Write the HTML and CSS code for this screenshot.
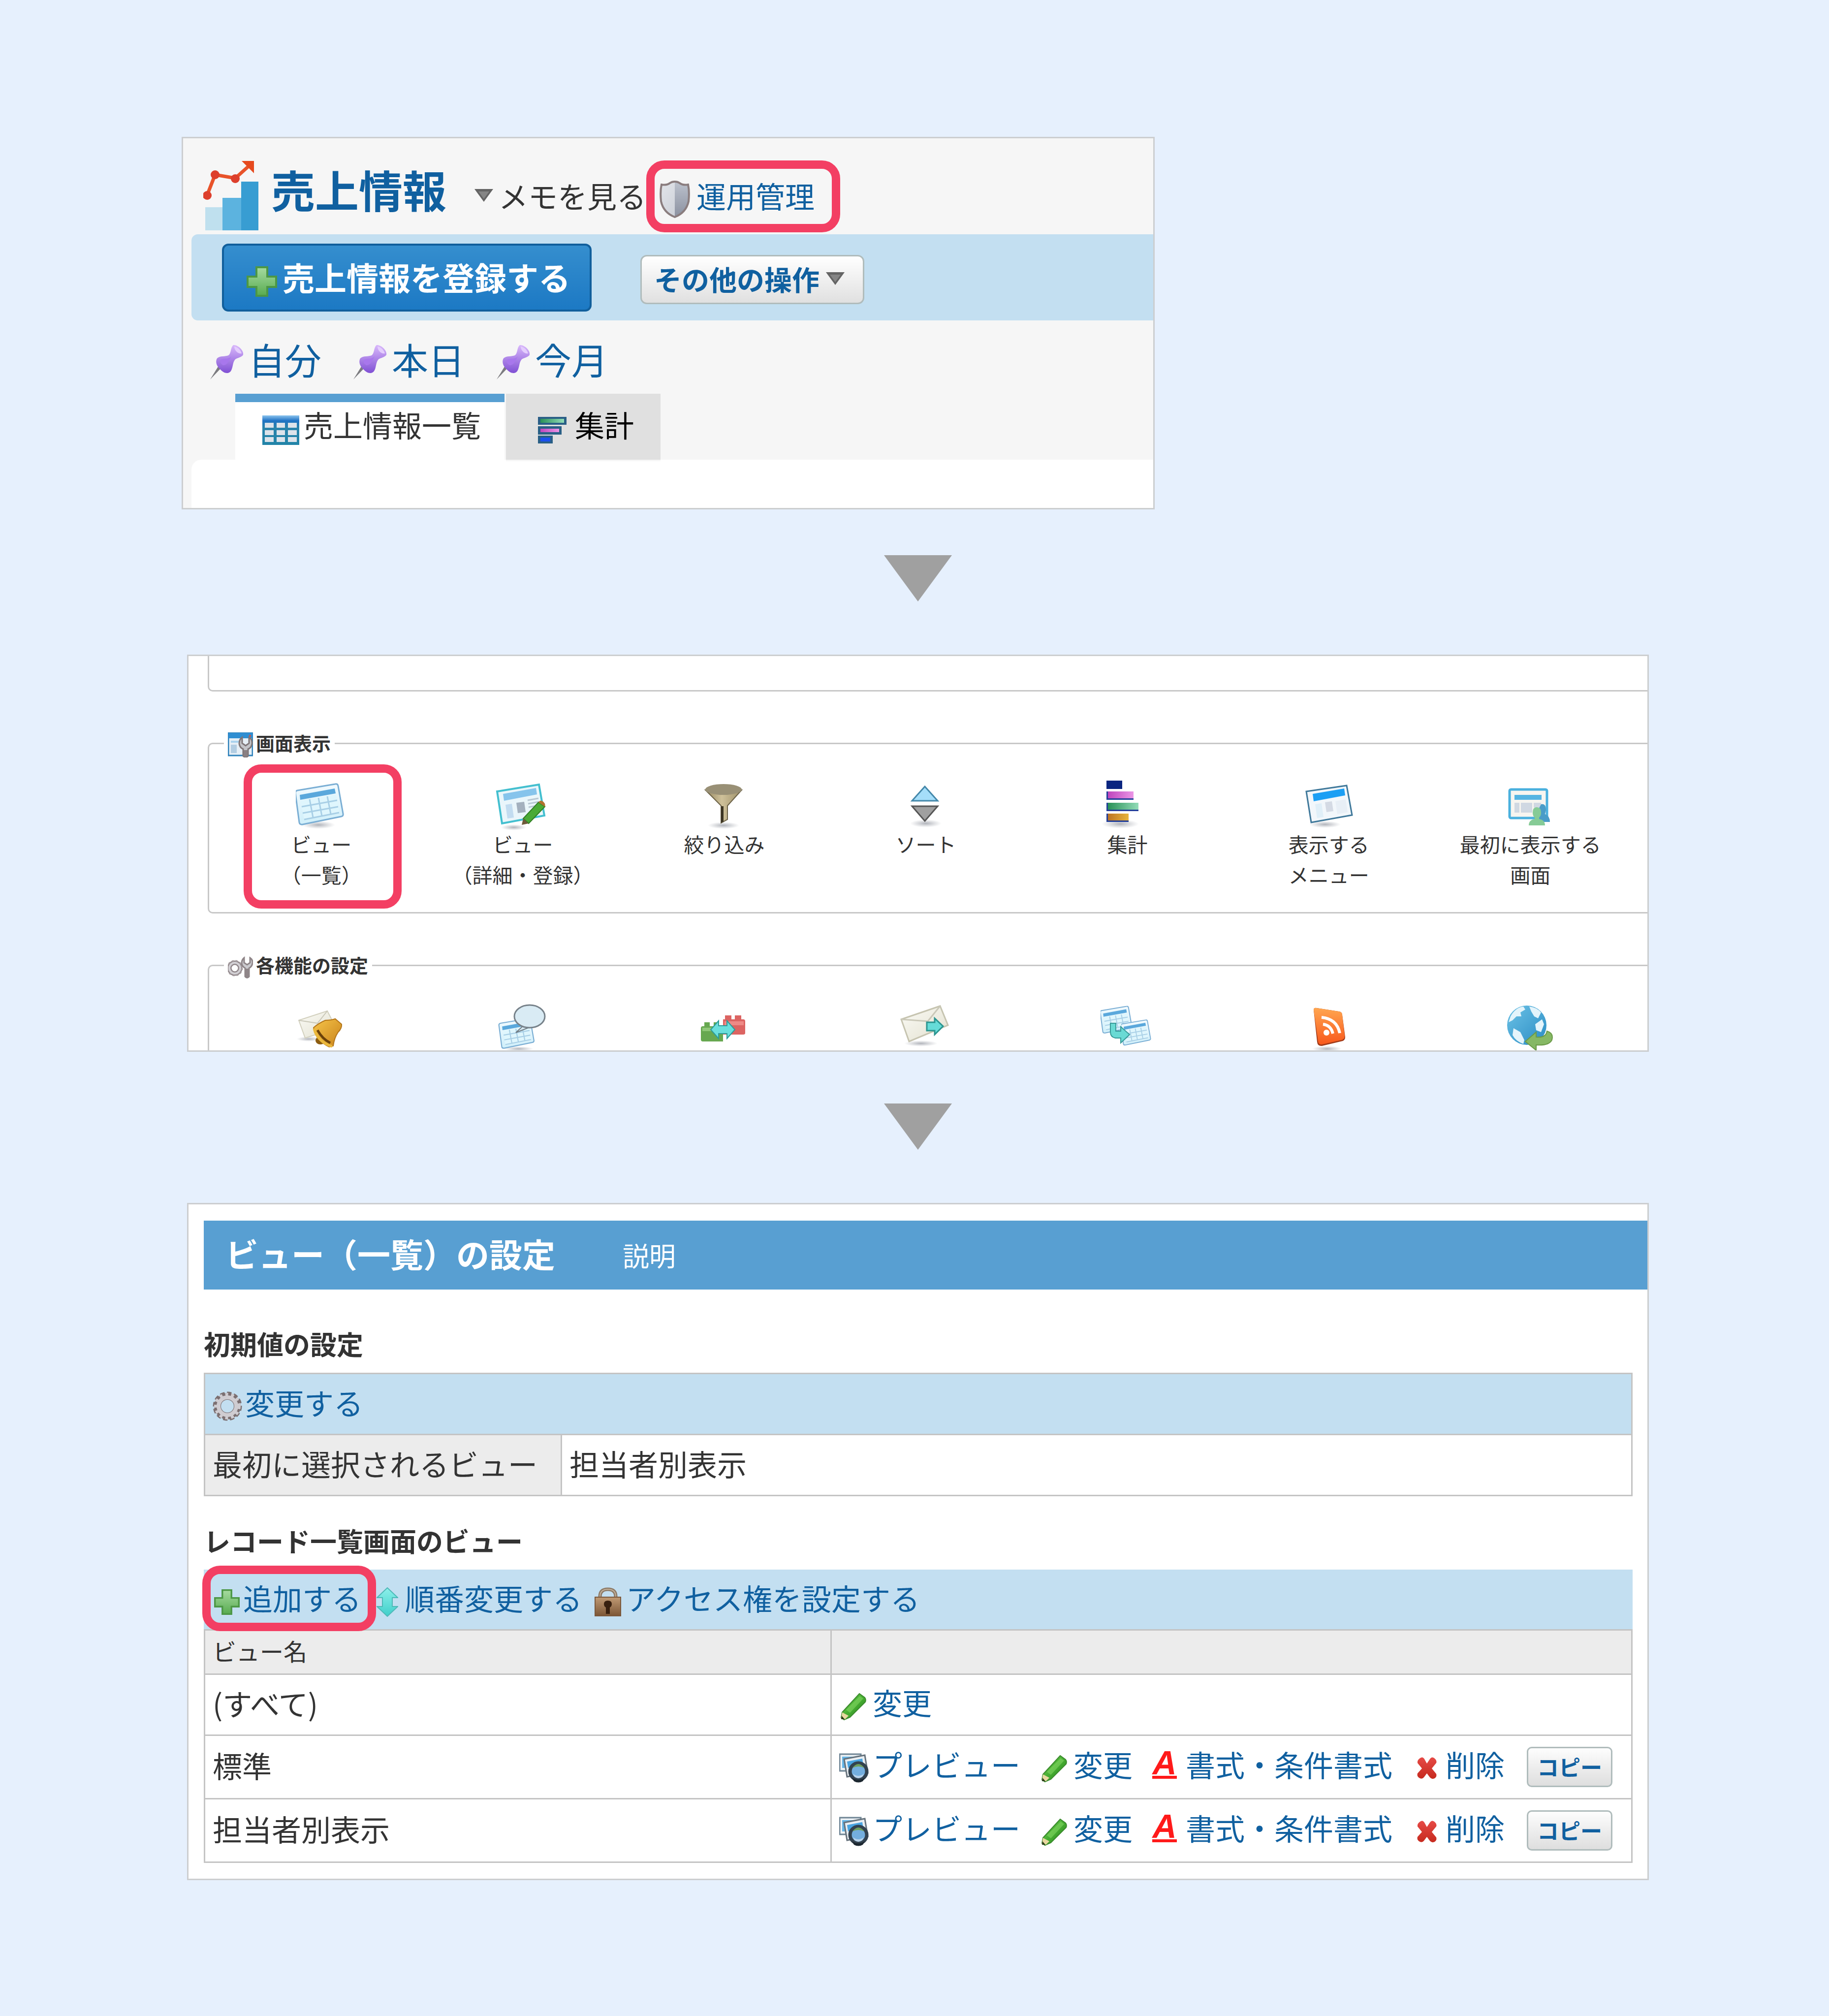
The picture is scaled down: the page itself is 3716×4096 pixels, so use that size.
FILE: index.html
```html
<!DOCTYPE html>
<html lang="ja">
<head>
    <meta charset="UTF-8">
    <title>ビュー(一覧)の設定</title>
    <link rel="stylesheet" href="styles.css">
</head>
<body>
<svg class="defs" aria-hidden="true">
    <defs>
        <linearGradient id="gGreen" x1="0" y1="0" x2="0" y2="1">
            <stop offset="0" stop-color="#a6dba0"/><stop offset="1" stop-color="#58ab50"/>
        </linearGradient>
        <linearGradient id="gCyan" x1="0" y1="0" x2="0" y2="1">
            <stop offset="0" stop-color="#8df0ea"/><stop offset="1" stop-color="#3fcfca"/>
        </linearGradient>
        <linearGradient id="gShieldL" x1="0" y1="0" x2="1" y2="1">
            <stop offset="0" stop-color="#e2e5ea"/><stop offset="1" stop-color="#c6cad2"/>
        </linearGradient>
        <linearGradient id="gShieldR" x1="0" y1="0" x2="0" y2="1">
            <stop offset="0" stop-color="#bcc2cd"/><stop offset="1" stop-color="#8b91a0"/>
        </linearGradient>
        <linearGradient id="gPin" x1="0" y1="0" x2="0" y2="1">
            <stop offset="0" stop-color="#d9b8fb"/><stop offset="1" stop-color="#8050d4"/>
        </linearGradient>
        <linearGradient id="gTable" x1="0" y1="0" x2="0" y2="1">
            <stop offset="0" stop-color="#8cc4ee"/><stop offset="0.18" stop-color="#1f72c4"/><stop offset="0.4" stop-color="#2a83ab"/><stop offset="1" stop-color="#2284a8"/>
        </linearGradient>
        <linearGradient id="gSky" x1="0" y1="0" x2="0" y2="1">
            <stop offset="0" stop-color="#f2fafe"/><stop offset="1" stop-color="#cfeffa"/>
        </linearGradient>
        <linearGradient id="gFunnel" x1="0" y1="0" x2="1" y2="0">
            <stop offset="0" stop-color="#93855e"/><stop offset="0.45" stop-color="#cfc19a"/><stop offset="1" stop-color="#9d9069"/>
        </linearGradient>
        <linearGradient id="gBell" x1="0" y1="0" x2="1" y2="1">
            <stop offset="0" stop-color="#f6c54a"/><stop offset="1" stop-color="#c9821a"/>
        </linearGradient>
        <linearGradient id="gRss" x1="0" y1="0" x2="0" y2="1">
            <stop offset="0" stop-color="#ffa650"/><stop offset="1" stop-color="#f8581c"/>
        </linearGradient>
        <linearGradient id="gGlobe" x1="0" y1="0" x2="1" y2="1">
            <stop offset="0" stop-color="#6cc2e6"/><stop offset="1" stop-color="#2a8cc4"/>
        </linearGradient>
        <linearGradient id="gMail" x1="0" y1="0" x2="1" y2="1">
            <stop offset="0" stop-color="#fbfbf6"/><stop offset="1" stop-color="#e2e0cf"/>
        </linearGradient>
        <linearGradient id="gPink" x1="0" y1="0" x2="1" y2="0">
            <stop offset="0" stop-color="#bf46bd"/><stop offset="1" stop-color="#eb95e6"/>
        </linearGradient>
        <linearGradient id="gMint" x1="0" y1="0" x2="1" y2="0">
            <stop offset="0" stop-color="#2a9158"/><stop offset="1" stop-color="#93dcb8"/>
        </linearGradient>
        <linearGradient id="gGold" x1="0" y1="0" x2="1" y2="0">
            <stop offset="0" stop-color="#bc7424"/><stop offset="1" stop-color="#e6b43c"/>
        </linearGradient>
        <linearGradient id="gLock" x1="0" y1="0" x2="0" y2="1">
            <stop offset="0" stop-color="#c09a74"/><stop offset="1" stop-color="#7c5636"/>
        </linearGradient>
        <linearGradient id="gCross" x1="0" y1="0" x2="0" y2="1">
            <stop offset="0" stop-color="#e64a46"/><stop offset="1" stop-color="#c62a1e"/>
        </linearGradient>
        <linearGradient id="gPencil" x1="0" y1="0" x2="1" y2="1">
            <stop offset="0" stop-color="#7ed35c"/><stop offset="0.5" stop-color="#46ae32"/><stop offset="1" stop-color="#2a7f1e"/>
        </linearGradient>
        <radialGradient id="gShadow">
            <stop offset="0" stop-color="#8e929c" stop-opacity="0.7"/><stop offset="1" stop-color="#a0a4ac" stop-opacity="0"/>
        </radialGradient>
    </defs>
    <symbol id="i-plus" viewBox="0 0 62 62">
        <path d="M20 2H42V21H60V42H42V60H20V42H2V21H20Z" fill="url(#gGreen)" stroke="#4c9745" stroke-width="4"/>
    </symbol>
    <symbol id="i-down" viewBox="0 0 40 28">
        <path d="M1 1H39L20 27Z" fill="#646464"/><path d="M9 6H31L20 21Z" fill="#858585"/>
    </symbol>
    <symbol id="i-pin" viewBox="0 0 70 72">
        <path d="M23 48L1 71L17 45Z" fill="#7c7c80"/>
        <path d="M48 1C57 0 70 12 68 21C65 26 56 27 52 30C46 37 48 46 43 54C38 61 28 58 22 51C14 44 11 35 15 28C21 22 32 25 38 22C44 18 42 6 48 1Z" fill="url(#gPin)"/>
        <path d="M50 4C57 5 63 11 65 18C58 20 50 12 50 4Z" fill="#e4cdfd"/>
        <path d="M44 24C38 31 30 27 22 31C20 36 24 41 28 42C36 42 40 32 44 24Z" fill="#a877ec"/>
    </symbol>
    <symbol id="i-pencil" viewBox="0 0 60 60">
        <path d="M41 5L52 13Q55 17 53 22L22 53L10 58L4 54L6 43Z" fill="url(#gPencil)" stroke="#3a8a2c" stroke-width="2"/>
        <path d="M42 10L49 15L22 44L14 38Z" fill="#86d866" opacity="0.55"/>
        <path d="M6 43L19 50L12 57L4 55Z" fill="#e8d8a0"/>
        <path d="M5 50L11 57L4 57Z" fill="#2a3a18"/>
    </symbol>
    <symbol id="i-preview" viewBox="0 0 60 60">
        <path d="M1 2H44V36H1Z" fill="#eef3f6" stroke="#6e8494" stroke-width="3"/>
        <path d="M6 7H38V14H14V30H6Z" fill="#64b4e6"/>
        <path d="M10 12L52 4L58 40L16 48Z" fill="#e9eef2" stroke="#66727c" stroke-width="3"/>
        <path d="M16 17L47 11L49 24L18 30Z" fill="#4aa4e0"/>
        <circle cx="39" cy="37" r="17" fill="#74aede" stroke="#33424f" stroke-width="7"/>
        <path d="M27 30Q39 14 51 30Q39 24 27 30Z" fill="#6f9f5c"/>
        <path d="M28 42Q39 50 50 42L47 48Q39 54 31 48Z" fill="#b8d2ea"/>
        <path d="M26 50Q39 58 52 50L48 57Q39 62 30 57Z" fill="#1c2730"/>
    </symbol>
    <symbol id="i-cross" viewBox="0 0 60 60">
        <path d="M18 9Q22 7 25 12L30 21L36 12Q40 6 45 10Q51 15 49 20L40 31L49 42Q51 47 46 51Q40 54 36 49L30 41L24 49Q20 54 14 50Q9 46 11 41L20 31L11 20Q10 13 18 9Z" fill="url(#gCross)"/>
    </symbol>
    <symbol id="i-sheet" viewBox="0 0 100 90">
        <path d="M-1 20Q-1 16 3 15L80 2Q85 1 86 6L96 62Q97 67 92 68L14 84Q8 85 7 80Z" fill="url(#gSky)" stroke="#7aaed4" stroke-width="3"/>
        <path d="M8 24L79 11L81 21L9 34Z" fill="#5aa8dc"/>
        <path d="M10 36L82 23L88 60L17 74Z" fill="#dff6fd"/>
        <path d="M12 48L84 35M14 61L86 48M17 74L88 60M28 33L35 70M46 30L53 67M64 27L71 63" stroke="#a8cfe6" stroke-width="3" fill="none"/>
    </symbol>
</svg>

<div class="page">
    <section class="panel app">
        <header class="app-head">
            <svg class="app-logo" viewBox="0 0 112 142">
                <path d="M4 95H39V142H4Z" fill="#bfe0ee"/>
                <path d="M39 76H77V142H39Z" fill="#5cb3df"/>
                <path d="M77 43H112V142H77Z" fill="#389dd2"/>
                <path d="M8 70L24 29L65 36L94 10" fill="none" stroke="#e8532a" stroke-width="7"/>
                <path d="M78 1H103V26Z" fill="#e64a1e"/>
                <circle cx="8" cy="71" r="9" fill="#dd3f2c"/><circle cx="24" cy="29" r="9" fill="#dd3f2c"/><circle cx="65" cy="37" r="9" fill="#dd3f2c"/>
            </svg>
            <h1>売上情報</h1>
            <a class="memo" href="#"><svg class="tri"><use href="#i-down"/></svg>メモを見る</a>
            <a class="admin" href="#">
                <svg class="shield" viewBox="0 0 62 76">
                    <path d="M31 2Q37 2 41 5Q48 10 58 8Q61 22 59 42Q54 65 31 74Q8 65 3 42Q1 22 4 8Q14 10 21 5Q25 2 31 2Z" fill="url(#gShieldL)"/>
                    <path d="M31 2Q37 2 41 5Q48 10 58 8Q61 22 59 42Q54 65 31 74Z" fill="url(#gShieldR)"/>
                    <path d="M31 2Q37 2 41 5Q48 10 58 8Q61 22 59 42Q54 65 31 74Q8 65 3 42Q1 22 4 8Q14 10 21 5Q25 2 31 2Z" fill="none" stroke="#8a7d7e" stroke-width="4"/>
                </svg>運用管理</a>
        </header>
        <div class="toolbar">
            <button class="btn-primary" type="button"><svg class="plus"><use href="#i-plus"/></svg>売上情報を登録する</button>
            <button class="btn-other" type="button">その他の操作<svg class="tri"><use href="#i-down"/></svg></button>
        </div>
        <nav class="pins">
            <a href="#"><svg><use href="#i-pin"/></svg>自分</a>
            <a href="#"><svg><use href="#i-pin"/></svg>本日</a>
            <a href="#"><svg><use href="#i-pin"/></svg>今月</a>
        </nav>
        <nav class="tabs">
            <a class="on" href="#">
                <svg class="ico-table" viewBox="0 0 75 60">
                    <path d="M0 0H75V60H0Z" fill="url(#gTable)"/>
                    <path d="M5 15H23V25H5ZM29 15H46V25H29ZM52 15H70V25H52ZM5 30H23V40H5ZM29 30H46V40H29ZM52 30H70V40H52ZM5 44H23V54H5ZM29 44H46V54H29ZM52 44H70V54H52Z" fill="#dde3ea"/>
                </svg>売上情報一覧</a>
            <a class="off" href="#">
                <svg class="ico-bars" viewBox="0 0 58 56">
                    <path d="M0 1H58V17H0ZM0 20H48V37H0ZM0 39H30V55H0Z" fill="#2a5f86"/>
                    <path d="M5 5H53V13H5Z" fill="url(#gMint)"/>
                    <path d="M5 25H43V32H5Z" fill="url(#gPink)"/>
                    <path d="M5 43H25V51H5Z" fill="#1b50ee"/>
                </svg>集計</a>
        </nav>
        <div class="app-body"></div>
    </section>

    <svg class="arrow" viewBox="0 0 138 94"><path d="M0 0H138L69 94Z" fill="#a0a0a0"/></svg>

    <section class="panel admin-menu">
        <div class="prev-group"></div>
        <fieldset class="group">
            <legend>
                <svg viewBox="0 0 51 51">
                    <path d="M1 1H50V47H1Z" fill="#e6eff6" stroke="#3183bb" stroke-width="3"/>
                    <path d="M1 1H50V12H1Z" fill="#2f8ed2"/>
                    <path d="M6 17H30V21H6Z" fill="#a9d2ee"/><path d="M6 25H18V42H6Z" fill="#b2cde2"/>
                    <circle cx="45" cy="7" r="2" fill="#e04a3a"/>
                    <path d="M29 10V22L36 27L43 22V10Q50 14 49 23Q48 31 41 34V48Q36 53 31 48V34Q24 31 23 23Q23 14 29 10Z" fill="#c3c4c9" stroke="#7f7678" stroke-width="3"/>
                    <path d="M32 36H40V48Q36 52 32 48Z" fill="#8a8083"/>
                </svg>画面表示</legend>
            <ul class="items">
                <li class="mark"><a href="#">
                    <svg viewBox="0 0 104 100"><ellipse cx="46" cy="90" rx="34" ry="8" fill="url(#gShadow)"/><use href="#i-sheet" x="0" y="5" width="100" height="90"/></svg>
                    ビュー<br>（一覧）</a></li>
                <li><a href="#">
                    <svg viewBox="0 0 104 100">
                        <ellipse cx="34" cy="95" rx="26" ry="6" fill="url(#gShadow)"/>
                        <path d="M0 22L85 8L96 71L10 87Z" fill="#eaf6fb" stroke="#43bfcf" stroke-width="4"/>
                        <path d="M12 27L79 15L81 28L14 41Z" fill="#86c4ec"/>
                        <path d="M17 49L30 47L34 75L21 77Z" fill="#c2dcf0"/>
                        <path d="M39 45L55 43L58 64L42 66Z" fill="#a3b0be"/>
                        <path d="M62 40L84 36M63 47L85 43M64 54L80 51" stroke="#b8c8d4" stroke-width="3"/>
                        <path d="M84 44L97 53L64 87L53 77Z" fill="#4aab36" stroke="#2f7f22" stroke-width="2"/>
                        <path d="M84 44Q88 38 94 43Q99 48 97 53Z" fill="#b0722e"/>
                        <path d="M53 77L64 87L50 90Z" fill="#6d5a3a"/>
                    </svg>
                    ビュー<br>（詳細・登録）</a></li>
                <li><a href="#">
                    <svg viewBox="0 0 104 100">
                        <ellipse cx="50" cy="91" rx="32" ry="7" fill="url(#gShadow)"/>
                        <path d="M13 19L45 51V86L58 79V51L87 19Z" fill="url(#gFunnel)" stroke="#6c6248" stroke-width="2"/>
                        <path d="M45 52H50V83L45 86Z" fill="#3c3524"/>
                        <ellipse cx="50" cy="18" rx="37" ry="11" fill="#999076"/>
                    </svg>
                    絞り込み</a></li>
                <li><a href="#">
                    <svg viewBox="0 0 104 100">
                        <ellipse cx="52" cy="87" rx="32" ry="8" fill="url(#gShadow)"/>
                        <path d="M50 12L76 41H24Z" fill="#a5defa" stroke="#4488aa" stroke-width="3"/>
                        <path d="M50 82L76 52H24Z" fill="#a0a0a0" stroke="#555" stroke-width="3"/>
                    </svg>
                    ソート</a></li>
                <li><a href="#">
                    <svg viewBox="0 0 104 100">
                        <ellipse cx="38" cy="88" rx="38" ry="9" fill="url(#gShadow)"/>
                        <path d="M10 0H42V17H10Z" fill="#0a2580"/>
                        <path d="M10 22H65V39H10ZM10 45H75V62H10ZM10 67H55V84H10Z" fill="#24409a"/>
                        <path d="M13 22H65V36H13Z" fill="url(#gPink)"/>
                        <path d="M13 45H75V59H13Z" fill="url(#gMint)"/>
                        <path d="M13 67H55V81H13Z" fill="url(#gGold)"/>
                    </svg>
                    集計</a></li>
                <li><a href="#">
                    <svg viewBox="0 0 104 100">
                        <ellipse cx="44" cy="89" rx="32" ry="7" fill="url(#gShadow)"/>
                        <path d="M6 22L88 10L99 70L16 85Z" fill="#f2f7fb" stroke="#3f789a" stroke-width="3"/>
                        <path d="M19 27L83 16L85 30L21 42Z" fill="#1b9ff4"/>
                        <path d="M24 48L37 46L41 74L28 76Z" fill="#e0eff8"/>
                        <path d="M44 44L58 42L61 62L47 64Z" fill="#d4dae4"/>
                        <path d="M65 42L86 38L90 64L69 68Z" fill="#e8eff6"/>
                    </svg>
                    表示する<br>メニュー</a></li>
                <li><a href="#">
                    <svg viewBox="0 0 104 100">
                        <rect x="10" y="18" width="76" height="58" rx="3" fill="#f7f5f0" stroke="#4ab0de" stroke-width="5"/>
                        <path d="M20 29H75V39H20Z" fill="#55b4e2"/>
                        <path d="M20 45H30V65H20ZM33 45H56V65H33ZM59 45H74V55H59Z" fill="#d0d8e2"/>
                        <path d="M74 48Q84 46 84 60L82 68Q92 72 92 84H66V64Z" fill="#4a9cc8"/>
                        <path d="M65 54Q74 54 74 65Q74 72 70 75V78Q82 80 82 91H49Q49 80 61 78V75Q57 72 57 65Q57 54 65 54Z" fill="#86cb96"/>
                    </svg>
                    最初に表示する<br>画面</a></li>
            </ul>
        </fieldset>
        <fieldset class="group last">
            <legend>
                <svg viewBox="0 0 51 51">
                    <circle cx="14" cy="28" r="11" fill="none" stroke="#90868a" stroke-width="9"/>
                    <circle cx="14" cy="28" r="15" fill="none" stroke="#a39a9d" stroke-width="3" stroke-dasharray="4 4"/>
                    <circle cx="14" cy="28" r="11" fill="none" stroke="#d2d0d4" stroke-width="4"/>
                    <path d="M33 7V17L39 21L45 17V7Q51 11 50 18Q49 25 43 28V45Q39 50 35 45V28Q29 25 28 18Q28 11 33 7Z" fill="#cbcace" stroke="#8f8588" stroke-width="3"/>
                    <path d="M35 29H43V45Q39 49 35 45Z" fill="#8f8588"/>
                </svg>各機能の設定</legend>
            <ul class="items">
                <li><a href="#" aria-label="通知">
                    <svg viewBox="0 0 104 100">
                        <ellipse cx="26" cy="74" rx="24" ry="5" fill="url(#gShadow)"/>
                        <path d="M6 36L64 17L82 52L19 72Z" fill="url(#gMail)" stroke="#d2d0be" stroke-width="2"/>
                        <path d="M6 36L44 42L64 17" fill="none" stroke="#c8c6b6" stroke-width="2"/>
                        <ellipse cx="50" cy="77" rx="10" ry="8" fill="#8c5c10"/>
                        <path d="M36 51Q46 42 60 36Q72 36 80 33L93 44Q94 52 86 60Q78 72 76 88L68 90Q42 78 36 51Z" fill="url(#gBell)" stroke="#b4761a" stroke-width="2"/>
                        <path d="M44 56Q54 74 70 82" fill="none" stroke="#6b420a" stroke-width="5"/>
                        <path d="M37 53Q44 80 74 89" fill="none" stroke="#eab83c" stroke-width="5"/>
                    </svg></a></li>
                <li><a href="#" aria-label="コメント">
                    <svg viewBox="0 0 104 100">
                        <ellipse cx="44" cy="94" rx="30" ry="5" fill="url(#gShadow)"/>
                        <use href="#i-sheet" x="2" y="31" width="78" height="66"/>
                        <path d="M52 48L38 61L64 51Z" fill="#d6e9f2" stroke="#707c84" stroke-width="2"/>
                        <ellipse cx="66" cy="28" rx="31" ry="23" fill="#d9ebf4" stroke="#77828a" stroke-width="3"/>
                    </svg></a></li>
                <li><a href="#" aria-label="連携">
                    <svg viewBox="0 0 104 100">
                        <path d="M49 34H53V26H66V34H73V26H86V34H90Q94 34 94 38V62Q94 65 90 65H49Z" fill="#dc6462"/>
                        <path d="M52 38H91V46H52Z" fill="#ee8a86"/>
                        <path d="M4 52Q4 48 8 48H11V40H22V48H30V40H41V48H49V79H8Q4 79 4 75Z" fill="#67a850"/>
                        <path d="M7 51H46V58H7Z" fill="#8fc878"/>
                        <path d="M24 55L40 37V47H57V37L73 55L57 73V63H40V73Z" fill="#6adfdc" stroke="#2c9c9a" stroke-width="2"/>
                    </svg></a></li>
                <li><a href="#" aria-label="メール配信">
                    <svg viewBox="0 0 104 100">
                        <ellipse cx="42" cy="83" rx="34" ry="6" fill="url(#gShadow)"/>
                        <path d="M2 34L81 7L97 46L18 79Z" fill="url(#gMail)" stroke="#c6c4b0" stroke-width="3"/>
                        <path d="M2 34L56 38L81 7" fill="none" stroke="#cac8b8" stroke-width="3"/>
                        <path d="M54 40H70V32L87 48L70 65V57H54Z" fill="#66dcd8" stroke="#2c9590" stroke-width="3"/>
                    </svg></a></li>
                <li><a href="#" aria-label="レコード連動">
                    <svg viewBox="0 0 104 100">
                        <use href="#i-sheet" x="-2" y="5" width="66" height="62"/>
                        <use href="#i-sheet" x="40" y="32" width="62" height="60"/>
                        <path d="M18 42H29V58H39V49L57 65L39 82V72H28Q18 70 18 60Z" fill="#6adad4" stroke="#389a98" stroke-width="2"/>
                    </svg></a></li>
                <li><a href="#" aria-label="RSS">
                    <svg viewBox="0 0 104 100">
                        <ellipse cx="48" cy="94" rx="30" ry="6" fill="url(#gShadow)"/>
                        <path d="M21 15Q21 10 27 11L72 18Q79 19 79 25L85 70Q85 76 80 78L38 88Q29 89 28 80Z" fill="#a03a18"/>
                        <path d="M21 15Q21 10 27 11L72 18Q79 19 79 25L84 68Q84 74 78 76L38 85Q31 86 30 79Z" fill="url(#gRss)"/>
                        <circle cx="47" cy="61" r="6" fill="#fff"/>
                        <path d="M40 44Q56 46 60 63M37 30Q68 33 74 62" fill="none" stroke="#fff" stroke-width="6"/>
                    </svg></a></li>
                <li><a href="#" aria-label="公開">
                    <svg viewBox="0 0 104 100">
                        <circle cx="45" cy="46" r="40" fill="url(#gGlobe)"/>
                        <path d="M12 28Q22 10 38 8L42 14L32 20L34 28L24 28L16 36L8 40ZM50 8Q66 10 74 20L68 32L60 28L54 18ZM18 52L32 60L40 76L38 84Q22 78 16 66ZM62 44L76 34L80 44L74 60L64 56Z" fill="#e4f4fb"/>
                        <path d="M42 79L64 60V70Q84 72 86 58Q100 62 96 76Q90 88 64 86V97Z" fill="#86b864" stroke="#6b9a48" stroke-width="2"/>
                    </svg></a></li>
            </ul>
        </fieldset>
    </section>

    <svg class="arrow" viewBox="0 0 138 94"><path d="M0 0H138L69 94Z" fill="#a0a0a0"/></svg>

    <section class="panel view-setting">
        <header class="view-head">
            <h1>ビュー（一覧）の設定</h1>
            <a href="#">説明</a>
        </header>
        <div class="view-body">
            <h2>初期値の設定</h2>
            <table class="default">
                <colgroup>
                    <col class="col-name">
                    <col>
                </colgroup>
                <tr class="bar">
                    <td colspan="2"><a class="act" href="#">
                        <svg viewBox="0 0 60 60">
                            <circle cx="30" cy="30" r="20" fill="none" stroke="#7b6f71" stroke-width="14"/>
                            <circle cx="30" cy="30" r="27" fill="none" stroke="#7b6f71" stroke-width="5" stroke-dasharray="9 5"/>
                            <circle cx="30" cy="30" r="18" fill="none" stroke="#cfccd1" stroke-width="8"/>
                            <circle cx="30" cy="30" r="24" fill="none" stroke="#cfccd1" stroke-width="6" stroke-dasharray="6 6"/>
                        </svg>変更する</a></td>
                </tr>
                <tr>
                    <th>最初に選択されるビュー</th>
                    <td>担当者別表示</td>
                </tr>
            </table>
            <h2 class="second">レコード一覧画面のビュー</h2>
            <div class="actions">
                <a class="add" href="#"><svg class="s-add"><use href="#i-plus"/></svg>追加する</a>
                <a class="order" href="#">
                    <svg class="s-order" viewBox="0 0 44 60"><path d="M22 1L43 21H32V39H43L22 59L1 39H12V21H1Z" fill="url(#gCyan)" stroke="#4fb9b8" stroke-width="2"/></svg>順番変更する</a>
                <a class="access" href="#">
                    <svg class="s-lock" viewBox="0 0 54 60">
                        <path d="M11 26V19Q11 4 27 4Q43 4 43 19V26" fill="none" stroke="#8d7a66" stroke-width="7"/>
                        <path d="M11 24V19Q11 4 27 4Q43 4 43 19V24" fill="none" stroke="#c3b29c" stroke-width="2"/>
                        <path d="M1 20H53V58H1Z" fill="url(#gLock)" stroke="#7a583c" stroke-width="2"/>
                        <path d="M27 27Q35 27 35 34Q35 39 31 41V54H23V41Q19 39 19 34Q19 27 27 27Z" fill="#38200f"/>
                    </svg>アクセス権を設定する</a>
            </div>
            <table class="views">
                <tr class="head">
                    <th>ビュー名</th>
                    <th></th>
                </tr>
                <tr class="all">
                    <td>(すべて)</td>
                    <td><div class="ops"><a href="#"><svg><use href="#i-pencil"/></svg>変更</a></div></td>
                </tr>
                <tr>
                    <td>標準</td>
                    <td>
                        <div class="ops">
                            <a href="#"><svg><use href="#i-preview"/></svg>プレビュー</a>
                            <a href="#"><svg><use href="#i-pencil"/></svg>変更</a>
                            <a href="#"><span class="fmt">A</span>書式・条件書式</a>
                            <a href="#"><svg><use href="#i-cross"/></svg>削除</a>
                            <button type="button">コピー</button>
                        </div>
                    </td>
                </tr>
                <tr>
                    <td>担当者別表示</td>
                    <td>
                        <div class="ops">
                            <a href="#"><svg><use href="#i-preview"/></svg>プレビュー</a>
                            <a href="#"><svg><use href="#i-pencil"/></svg>変更</a>
                            <a href="#"><span class="fmt">A</span>書式・条件書式</a>
                            <a href="#"><svg><use href="#i-cross"/></svg>削除</a>
                            <button type="button">コピー</button>
                        </div>
                    </td>
                </tr>
            </table>
        </div>
    </section>
</div>
</body>
</html>
```
FILE: styles.css
```css
* {
    margin: 0;
    padding: 0;
    box-sizing: border-box;
}
body {
    background: #e6f0fd;
    color: #333;
    font-family: "Noto Sans CJK JP", sans-serif;
    font-size: 60px;
    line-height: 60px;
}
a {
    color: #1060a0;
    text-decoration: none;
    white-space: nowrap;
}
ul {
    list-style: none;
}
svg {
    display: block;
    flex: none;
}
button {
    font-family: inherit;
    font-weight: bold;
    white-space: nowrap;
    cursor: pointer;
}
.defs {
    position: absolute;
    width: 0;
    height: 0;
}
.page {
    padding: 278px 366px 278px 380px;
}
.panel {
    border: 3px solid #ccced0;
    background: #fff;
    overflow: hidden;
}
.arrow {
    width: 138px;
    height: 94px;
    margin: 105px auto 108px;
}

/* アプリ画面 */
.app {
    margin: 0 1004px 0 -11px;
    padding-left: 17px;
    background: #f6f6f6;
}
.app + .arrow {
    margin-top: 93px;
}
.app-head {
    display: flex;
    align-items: center;
    padding: 45px 0 4px 24px;
}
.app-logo {
    width: 112px;
    height: 142px;
    margin-bottom: 4px;
}
.app-head h1 {
    margin-left: 26px;
    padding-bottom: 30px;
    color: #1060a0;
    font-size: 89px;
    line-height: 90px;
    white-space: nowrap;
}
.tri {
    width: 40px;
    height: 28px;
}
.memo {
    display: flex;
    align-items: center;
    gap: 10px;
    margin-left: 56px;
    padding-bottom: 4px;
    color: #333;
}
.admin {
    display: flex;
    align-items: center;
    gap: 13px;
    height: 146px;
    padding: 0 35px 4px 10px;
    border: 17px solid #f33f63;
    border-radius: 37px;
}
.shield {
    width: 62px;
    height: 76px;
    margin-top: 16px;
}
.toolbar {
    display: flex;
    align-items: center;
    gap: 99px;
    height: 175px;
    padding-left: 62px;
    background: #c3dff1;
    border-radius: 13px 0 0 13px;
}
.btn-primary {
    display: flex;
    align-items: center;
    gap: 11px;
    height: 138px;
    padding: 0 39px 4px 46px;
    border: 4px solid #115f9c;
    border-radius: 13px;
    background: linear-gradient(#358ece, #1c79c4);
    color: #fff;
    font-size: 65px;
}
.plus {
    width: 62px;
    height: 62px;
    margin-top: 20px;
}
.btn-other {
    display: flex;
    align-items: center;
    gap: 12px;
    height: 100px;
    margin-top: 8px;
    padding: 0 36px 4px 25px;
    border: 3px solid #b0bcbc;
    border-radius: 13px;
    background: linear-gradient(#fff, #e0e0e0);
    color: #1060a0;
    font-size: 56px;
}
.pins {
    display: flex;
    gap: 64px;
    padding: 35px 0 28px 37px;
    font-size: 74px;
    line-height: 80px;
}
.pins a {
    display: flex;
    align-items: center;
    gap: 9px;
}
.pins svg {
    width: 70px;
    height: 72px;
    margin-top: 14px;
}
.tabs {
    display: flex;
    align-items: flex-start;
    padding-left: 89px;
}
.tabs a {
    display: flex;
    align-items: center;
    height: 134px;
    padding-bottom: 28px;
    color: #333;
}
.tabs svg {
    margin-top: 24px;
}
.tabs .on {
    gap: 9px;
    padding-left: 55px;
    padding-right: 48px;
    border-top: 17px solid #589fd2;
    background: #fff;
}
.tabs .off {
    gap: 17px;
    margin-bottom: -6px;
    margin-left: 3px;
    padding-left: 65px;
    padding-right: 54px;
    border-top: 17px solid #e0e0e0;
    background: #e0e0e0;
    box-shadow: 0 3px #f6f6f6;
    color: #000;
}
.ico-table {
    width: 75px;
    height: 60px;
}
.ico-bars {
    width: 58px;
    height: 56px;
}
.app-body {
    height: 98px;
    background: #fff;
    border-top-left-radius: 20px;
}

/* 運用管理メニュー */
.admin-menu {
    padding-left: 39px;
}
.prev-group {
    height: 72px;
    border: 3px solid #c8c8c8;
    border-width: 0 0 3px 3px;
    border-bottom-left-radius: 10px;
}
.group {
    margin-top: 79px;
    padding: 50px 33px 46px 23px;
    border: 3px solid #c8c8c8;
    border-right: 0;
    border-radius: 10px 0 0 10px;
}
.group.last {
    padding-bottom: 0;
    border-bottom: 0;
    border-bottom-left-radius: 0;
}
.group legend {
    display: flex;
    align-items: center;
    gap: 6px;
    height: 52px;
    margin-left: 7px;
    padding: 0 8px 2px;
    font-size: 38px;
    font-weight: bold;
}
.group legend svg {
    width: 51px;
    height: 51px;
    margin-top: 8px;
}
.items {
    display: grid;
    grid-template-columns: repeat(7, 1fr);
}
.items li {
    position: relative;
}
.items a {
    display: block;
    color: #333;
    font-size: 41px;
    line-height: 62px;
    text-align: center;
}
.items svg {
    width: 104px;
    height: 100px;
    margin: 0 auto -3px;
    overflow: visible;
}
.items .mark::after {
    content: "";
    position: absolute;
    top: -33px;
    right: 41px;
    bottom: -39px;
    left: 47px;
    border: 17px solid #f33f63;
    border-radius: 36px;
}

/* ビュー設定 */
.view-setting {
    padding: 33px 0 32px 31px;
}
.view-head {
    display: flex;
    align-items: center;
    gap: 137px;
    height: 140px;
    padding: 0 0 8px 44px;
    background: #589fd2;
}
.view-head h1 {
    color: #fff;
    font-size: 67px;
    white-space: nowrap;
}
.view-head a {
    padding-top: 8px;
    color: #fff;
    font-size: 54px;
}
.view-body {
    padding-right: 30px;
}
h2 {
    margin: 80px 0 29px;
    font-size: 54px;
}
h2.second {
    margin-top: 60px;
}
table {
    width: 100%;
    border-collapse: collapse;
    table-layout: fixed;
}
th, td {
    height: 124px;
    padding: 0 15px 8px;
    border: 3px solid #c4c4c4;
    text-align: left;
    white-space: nowrap;
}
th {
    background: #ececec;
    font-weight: normal;
}
.col-name {
    width: 25%;
}
.bar td {
    background: #c3dff1;
}
.act {
    display: flex;
    align-items: center;
    gap: 6px;
}
.act svg {
    width: 60px;
    height: 60px;
    margin-top: 16px;
}
.actions {
    display: flex;
    padding-left: 21px;
    background: #c3dff1;
}
.actions a {
    display: flex;
    align-items: center;
    height: 121px;
    padding-bottom: 8px;
}
.actions svg {
    margin-top: 18px;
}
.actions .add {
    position: relative;
    gap: 7px;
}
.add::after {
    content: "";
    position: absolute;
    top: -8px;
    right: -30px;
    bottom: -4px;
    left: -24px;
    border: 17px solid #f33f63;
    border-radius: 36px;
}
.order {
    gap: 14px;
    margin-left: 31px;
}
.access {
    gap: 10px;
    margin-left: 25px;
}
.s-add {
    width: 52px;
    height: 52px;
}
.s-order {
    width: 44px;
    height: 60px;
}
.s-lock {
    width: 54px;
    height: 60px;
}
.views td {
    height: 129px;
}
.views .all td {
    height: 124px;
}
.views .head th {
    height: 90px;
    font-size: 48px;
}
.views th:first-child {
    width: 1273px;
}
.views td + td {
    padding: 0 15px;
}
.ops {
    display: flex;
    align-items: center;
    gap: 40px;
}
.ops a {
    display: flex;
    align-items: center;
    gap: 8px;
    padding-bottom: 12px;
}
.ops svg {
    width: 60px;
    height: 60px;
    margin-top: 16px;
}
.fmt {
    width: 50px;
    margin-right: 10px;
    border-bottom: 6px solid #ff1a1a;
    color: #ff1a1a;
    font-family: "Liberation Sans", sans-serif;
    font-size: 68px;
    font-style: italic;
    font-weight: bold;
    line-height: 54px;
    text-align: center;
}
.ops button {
    height: 82px;
    margin-left: 5px;
    padding: 0 18px 2px;
    border: 3px solid #b0bcbc;
    border-radius: 10px;
    background: linear-gradient(#fdfdfd, #dedede);
    color: #1060a0;
    font-size: 44px;
}
```
